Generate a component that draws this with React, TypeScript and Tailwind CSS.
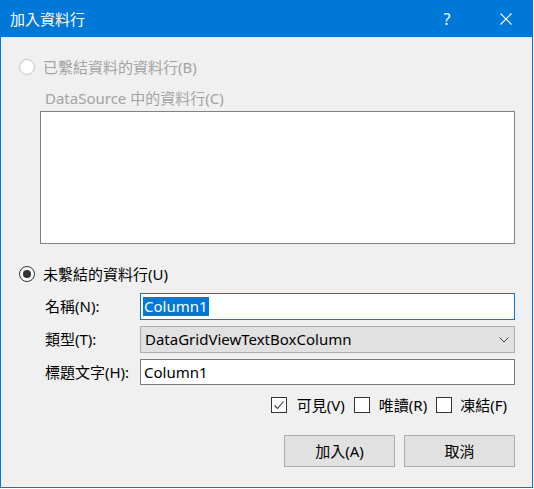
import React from 'react';

const font = { fontFamily: '"Noto Sans", "Noto Sans CJK TC", sans-serif' };

const Radio: React.FC<{ checked?: boolean; disabled?: boolean }> = ({ checked, disabled }) => (
  <div
    className={`w-[16px] h-[16px] rounded-full border flex items-center justify-center bg-white ${
      disabled ? 'border-[#c4c4c4]' : 'border-[#333333]'
    }`}
  >
    {checked && <div className="w-[8px] h-[8px] rounded-full bg-[#333333]" />}
  </div>
);

const Check: React.FC<{ checked?: boolean }> = ({ checked }) => (
  <div className="w-[16px] h-[16px] border border-[#333333] bg-white flex items-center justify-center">
    {checked && (
      <svg width="12" height="12" viewBox="0 0 12 12">
        <path d="M1.5 6.5 L4.5 9.5 L10.5 2.5" fill="none" stroke="#333333" strokeWidth="1.1" />
      </svg>
    )}
  </div>
);

export default function App() {
  return (
    <div className="w-[534px] h-[489px] bg-white" style={font}>
      <div className="w-[533px] h-[488px] border border-[#0078d7] bg-[#f0f0f0] flex flex-col">
        {/* Title bar */}
        <div className="h-[36px] bg-[#0078d7] flex items-center text-white text-[15px] pl-[9px]">
          <span className="flex-1">加入資料行</span>
          <span className="w-[46px] text-center text-[16px] mr-[13px]">?</span>
          <div className="w-[46px] h-[36px] flex items-center justify-center mr-[3px]">
            <svg width="12" height="12" viewBox="0 0 12 12">
              <path d="M0.5 0.5 L11.5 11.5 M11.5 0.5 L0.5 11.5" stroke="white" strokeWidth="1.1" />
            </svg>
          </div>
        </div>

        {/* Body */}
        <div className="flex flex-col pl-[18px] pr-[17px] text-[15px]">
          <div className="mt-[20px] h-[20px] flex items-center gap-[8px] text-[#a3a3a3]">
            <Radio disabled />
            <span>已繫結資料的資料行(B)</span>
          </div>
          <div className="mt-[11px] ml-[26px] h-[20px] leading-[20px] text-[#a3a3a3]">
            DataSource 中的資料行(C)
          </div>
          <div className="mt-[3px] ml-[21px] w-[475px] h-[133px] border border-[#828282] bg-white" />

          <div className="mt-[20px] h-[20px] flex items-center gap-[8px] text-black">
            <Radio checked />
            <span>未繫結的資料行(U)</span>
          </div>

          <div className="mt-[9px] ml-[26px] grid grid-cols-[95px_375px] gap-y-[6px] text-black">
            <div className="h-[27px] flex items-center">名稱(N):</div>
            <div className="h-[27px] border border-[#0078d7] bg-white flex items-center pl-[2px]">
              <span className="bg-[#0078d7] text-white leading-[19px] px-[1px]">Column1</span>
            </div>

            <div className="h-[27px] flex items-center">類型(T):</div>
            <div className="h-[27px] border border-[#adadad] bg-[#e1e1e1] flex items-center pl-[4px] pr-[5px]">
              <span className="flex-1">DataGridViewTextBoxColumn</span>
              <svg width="10" height="6" viewBox="0 0 10 6">
                <path d="M0.5 0.5 L5 5 L9.5 0.5" fill="none" stroke="#404040" strokeWidth="1" />
              </svg>
            </div>

            <div className="h-[27px] flex items-center">標題文字(H):</div>
            <div className="h-[26px] border border-[#7a7a7a] bg-white flex items-center pl-[3px]">
              Column1
            </div>
          </div>

          <div className="mt-[11px] h-[16px] flex items-center justify-end pr-[8px] text-black">
            <Check checked />
            <span className="ml-[10px]">可見(V)</span>
            <div className="ml-[9px]"><Check /></div>
            <span className="ml-[9px]">唯讀(R)</span>
            <div className="ml-[9px]"><Check /></div>
            <span className="ml-[8px]">凍結(F)</span>
          </div>

          <div className="mt-[22px] flex justify-end gap-[9px]">
            <button className="w-[111px] h-[32px] border border-[#adadad] bg-[#e1e1e1] text-black text-[15px]">
              加入(A)
            </button>
            <button className="w-[111px] h-[32px] border border-[#adadad] bg-[#e1e1e1] text-black text-[15px]">
              取消
            </button>
          </div>
        </div>
      </div>
    </div>
  );
}
